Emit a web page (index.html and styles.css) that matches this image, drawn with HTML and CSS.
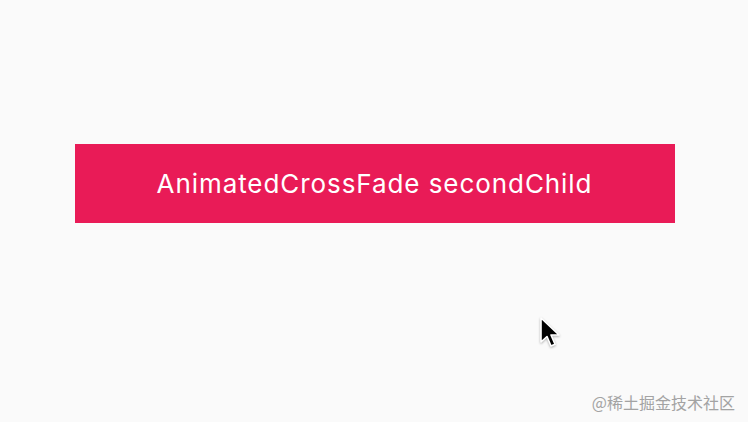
FILE: index.html
```html
<!DOCTYPE html>
<html>
<head>
<meta charset="utf-8">
<link rel="stylesheet" href="styles.css">
</head>
<body>
<div class="stage">
  <div class="fade-box">AnimatedCrossFade secondChild</div>
  <svg class="cursor" width="24" height="36" viewBox="0 0 24 36">
    <path d="M1 1 L1 25 L7 19.5 L11 29 L15 27.3 L11 18 L19 18 Z" fill="#000" stroke="#fff" stroke-width="1.6" stroke-linejoin="round"/>
  </svg>
  <div class="watermark">@稀土掘金技术社区</div>
</div>
</body>
</html>
```
FILE: styles.css
```css
html, body {
  margin: 0;
  padding: 0;
  background: #fafafa;
}
.stage {
  position: relative;
  width: 748px;
  height: 422px;
  overflow: hidden;
  padding-top: 144px;
  box-sizing: border-box;
}
.fade-box {
  margin-left: 75px;
  width: 600px;
  height: 79px;
  background: #e91b57;
  color: #fff;
  font-family: Inter, Roboto, "Liberation Sans", sans-serif;
  font-size: 26px;
  display: flex;
  align-items: center;
  justify-content: center;
  letter-spacing: 0.93px;
  padding-right: 1px;
  box-sizing: border-box;
}
.cursor {
  position: absolute;
  left: 540px;
  top: 317px;
  filter: drop-shadow(0 1px 1px rgba(0,0,0,0.3));
}
.watermark {
  position: absolute;
  right: 13px;
  top: 390px;
  font-family: "Noto Sans CJK SC", sans-serif;
  font-size: 16px;
  color: #a3a3a3;
}
```
